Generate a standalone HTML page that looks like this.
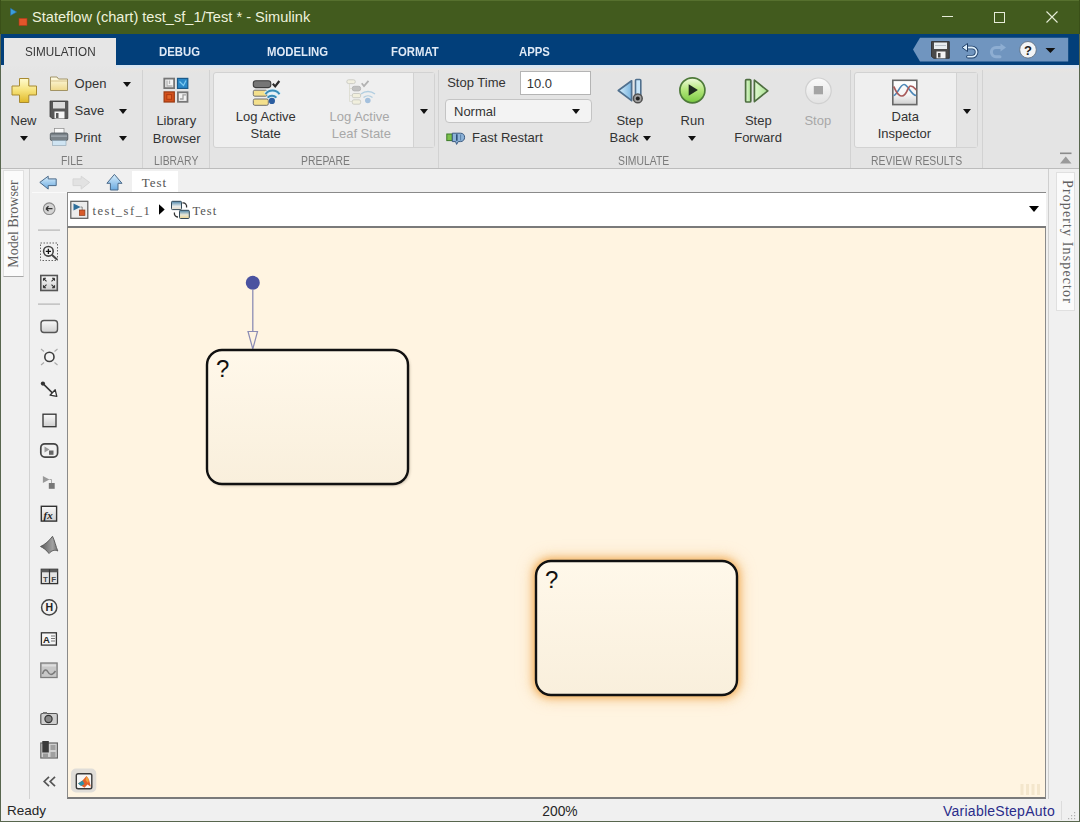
<!DOCTYPE html>
<html><head><meta charset="utf-8">
<style>
*{margin:0;padding:0;box-sizing:border-box}
html,body{width:1080px;height:822px;overflow:hidden;background:#f0f0f0;font-family:"Liberation Sans",sans-serif;color:#333;position:relative}
.a{position:absolute}
.t{position:absolute;white-space:nowrap;line-height:1}
.t13{font-size:13px}
.sec{font-size:13px;color:#7b7b7b;transform:scaleX(0.8);transform-origin:0 0}
.tab{font-size:13.5px;font-weight:bold;color:#dfe9f5;transform:scaleX(0.84);transform-origin:0 0}
.arr{position:absolute;width:0;height:0;border-left:4.5px solid transparent;border-right:4.5px solid transparent;border-top:5px solid #111}
.vsep{position:absolute;width:1px;background:#d2d2d2}
svg{position:absolute;overflow:visible}
</style></head><body>
<!-- title bar -->
<div class="a" style="left:0;top:0;width:1080px;height:34px;background:#425b1e;border-top:1px solid #56702e"></div>
<svg style="left:0;top:0" width="30" height="30" viewBox="0 0 30 30"><path d="M10.5 8.3 L16.7 12 L10.5 15.6Z" fill="#3a9ede" stroke="#2a6a9a" stroke-width="0.6"/><rect x="19" y="18.3" width="8" height="7.3" fill="#e2552a" stroke="#a83a1a" stroke-width="0.6"/></svg>
<div class="t" style="left:32px;top:10.1px;font-size:14.6px;color:#eef2dc">Stateflow (chart) test_sf_1/Test * - Simulink</div>
<div class="a" style="left:942px;top:16px;width:11px;height:1px;background:#e6ecd8"></div>
<div class="a" style="left:994px;top:12px;width:11px;height:11px;border:1px solid #e6ecd8"></div>
<svg style="left:1046px;top:11px" width="12" height="12" viewBox="0 0 12 12"><path d="M0.5 0.5L11.5 11.5M11.5 0.5L0.5 11.5" stroke="#e6ecd8" stroke-width="1.1"/></svg>
<!-- tab bar -->
<div class="a" style="left:0;top:34px;width:1080px;height:31px;background:#023f7a"></div>

<div class="a" style="left:4px;top:38px;width:112px;height:28px;background:#e6e6e6"></div>
<div class="t" style="left:24.7px;top:44.5px;font-size:13px;color:#383838;transform:scaleX(0.9);transform-origin:0 0">SIMULATION</div>
<div class="t tab" style="left:159.4px;top:45.2px">DEBUG</div>
<div class="t tab" style="left:266.5px;top:45.2px">MODELING</div>
<div class="t tab" style="left:391px;top:45.2px">FORMAT</div>
<div class="t tab" style="left:519px;top:45.2px">APPS</div>
<!-- quick access -->
<svg style="left:0;top:0" width="1080" height="66" viewBox="0 0 1080 66">
<path d="M913 49.5L920 37.8H1068.2V61.6H920Z" fill="#7095bf"/>
<!-- floppy -->
<path d="M931.5 41.6H949.3V58.3H933.5L931.5 56.3Z" fill="#4a4a4a" stroke="#2a2a2a" stroke-width="0.8"/>
<rect x="934" y="42.5" width="13" height="6.5" fill="#e8ecef"/>
<rect x="935" y="45" width="11" height="1" fill="#b8c0c8"/>
<rect x="936.5" y="51.5" width="9" height="6.8" fill="#f4f4f4"/>
<rect x="938" y="53" width="2.5" height="4.5" fill="#4a4a4a"/>
<!-- undo -->
<path d="M966 47.5H972A4.6 4.6 0 0 1 972 56.7H968" fill="none" stroke="#1e3e66" stroke-width="3.6" stroke-linecap="round"/>
<path d="M966 47.5H972A4.6 4.6 0 0 1 972 56.7H968" fill="none" stroke="#dceefc" stroke-width="1.8" stroke-linecap="round"/>
<path d="M962 47.5L967.5 43.5V51.5Z" fill="#dceefc" stroke="#1e3e66" stroke-width="1" stroke-linejoin="round"/>
<!-- redo faded -->
<path d="M1002 47.5H996A4.6 4.6 0 0 0 996 56.7H1000" fill="none" stroke="#8eaed2" stroke-width="3" stroke-linecap="round"/>
<path d="M1006 47.5L1000.5 43.5V51.5Z" fill="#8eaed2"/>
<!-- help -->
<circle cx="1028" cy="49.8" r="8.3" fill="#f2f4f6" stroke="#5a6a7a" stroke-width="0.8"/>
<text x="1028" y="55" text-anchor="middle" font-family="Liberation Sans" font-weight="bold" font-size="13" fill="#222">?</text>
<path d="M1045.5 48H1055.3L1050.4 53Z" fill="#111"/>
</svg>
<!-- ribbon -->
<div class="a" style="left:0;top:66px;width:1080px;height:103px;background:#e4e4e4;border-bottom:1px solid #bcbcbc"></div>
<div class="a" style="left:0;top:65px;width:1080px;height:8px;background:linear-gradient(#d6e4f2 0px,#dde6ee 3px,#e8e5e2 4px,#e4e4e4 8px)"></div>
<div class="a" style="left:4px;top:65px;width:112px;height:8px;background:linear-gradient(#e6e6e6,#e4e4e4)"></div>
<div class="vsep" style="left:142px;top:70px;height:98px"></div>
<div class="vsep" style="left:209px;top:70px;height:98px"></div>
<div class="vsep" style="left:438px;top:70px;height:98px"></div>
<div class="vsep" style="left:850px;top:70px;height:98px"></div>
<div class="vsep" style="left:982px;top:70px;height:98px"></div>
<!-- galleries -->
<div class="a" style="left:213px;top:72px;width:222px;height:76px;background:#efefef;border:1px solid #d2d2d2;border-radius:3px"></div>
<div class="a" style="left:413px;top:73px;width:21px;height:74px;background:#e4e4e4;border-left:1px solid #d2d2d2"></div>
<div class="a" style="left:854px;top:72px;width:124px;height:76px;background:#efefef;border:1px solid #d2d2d2;border-radius:3px"></div>
<div class="a" style="left:956px;top:73px;width:21px;height:74px;background:#e4e4e4;border-left:1px solid #d2d2d2"></div>
<!-- ribbon icons -->
<svg style="left:0;top:0" width="1080" height="170" viewBox="0 0 1080 170">
<defs>
<linearGradient id="gy" x1="0" y1="0" x2="0" y2="1"><stop offset="0" stop-color="#fffbd0"/><stop offset="0.5" stop-color="#f6e27a"/><stop offset="1" stop-color="#e0b828"/></linearGradient>
<linearGradient id="gf" x1="0" y1="0" x2="0" y2="1"><stop offset="0" stop-color="#fffde8"/><stop offset="1" stop-color="#efd88a"/></linearGradient>
<linearGradient id="gb" x1="0" y1="0" x2="1" y2="0"><stop offset="0" stop-color="#d8f0fc"/><stop offset="1" stop-color="#78b4e0"/></linearGradient>
<linearGradient id="gg" x1="0" y1="0" x2="0" y2="1"><stop offset="0" stop-color="#f2fbe0"/><stop offset="0.45" stop-color="#b8e880"/><stop offset="1" stop-color="#78c840"/></linearGradient>
<linearGradient id="gsf" x1="0" y1="0" x2="1" y2="0"><stop offset="0" stop-color="#e0fad0"/><stop offset="1" stop-color="#a8e090"/></linearGradient>
<linearGradient id="gdi" x1="0" y1="0" x2="0" y2="1"><stop offset="0" stop-color="#ffffff"/><stop offset="0.6" stop-color="#f4f4f4"/><stop offset="1" stop-color="#cfcfcf"/></linearGradient>
<linearGradient id="gst" x1="0" y1="0" x2="0" y2="1"><stop offset="0" stop-color="#fafafa"/><stop offset="1" stop-color="#e2e2e2"/></linearGradient>
</defs>
<!-- New plus -->
<path d="M19.5 78.5H28.8V86H36.5V95H28.8V102.5H19.5V95H12V86H19.5Z" fill="url(#gy)" stroke="#a88a30" stroke-width="1"/>
<!-- Open folder -->
<path d="M50.5 77H57L58.5 79H67.5V90.5H50.5Z" fill="url(#gf)" stroke="#9a8a5a" stroke-width="0.9"/>
<path d="M50.5 81H67.5" stroke="#c8b070" stroke-width="0.7"/>
<!-- Save floppy -->
<path d="M50 101H67.8V118.5H52L50 116.5Z" fill="#585858" stroke="#3a3a3a" stroke-width="0.8"/>
<rect x="53" y="102" width="12" height="6.5" fill="#dcdcdc"/>
<rect x="54.5" y="111.5" width="10" height="7" fill="#f6f6f6"/>
<rect x="56" y="113" width="2.5" height="5" fill="#585858"/>
<!-- Print -->
<rect x="54.5" y="128.5" width="9.5" height="5" fill="#fafafa" stroke="#8a8a8a" stroke-width="0.7"/>
<rect x="50.3" y="133" width="17.5" height="7.5" rx="1.5" fill="#7a8288" stroke="#4a5258" stroke-width="0.8"/>
<rect x="51" y="135.5" width="16" height="1.2" fill="#a8b0b8"/>
<rect x="52.5" y="140.5" width="13.5" height="5" fill="#cfe4f2" stroke="#8aa0b0" stroke-width="0.6"/>
<!-- Library browser -->
<rect x="164.3" y="78.6" width="9.8" height="9.5" fill="#f2f2f2" stroke="#767676" stroke-width="1.8"/>
<path d="M167 80.5V86H172.5M169.5 80.5V84" fill="none" stroke="#b4b4b4" stroke-width="1.3"/>
<rect x="177.5" y="78.4" width="10.3" height="10" fill="#2a88c8" stroke="#1a5a8a" stroke-width="1.2"/>
<path d="M179.5 81.5L183.5 85.5L186 80.5" fill="none" stroke="#7ac8f0" stroke-width="1.3"/>
<rect x="164.1" y="91.9" width="10.2" height="10.1" fill="#d4501c" stroke="#9a3a12" stroke-width="1.2"/>
<rect x="166.8" y="94.6" width="4.8" height="4.7" fill="#e0662a" stroke="#b03a10" stroke-width="1"/>
<rect x="177.9" y="92.3" width="9.6" height="9.5" fill="#f2f2f2" stroke="#767676" stroke-width="1.8"/>
<path d="M179.8 99H183V94.8H186" fill="none" stroke="#a0a0a0" stroke-width="1.3"/>
<!-- Log Active State -->
<rect x="253.3" y="80.8" width="17.5" height="6.8" rx="2.5" fill="#767676" stroke="#3e3e3e" stroke-width="1.1"/>
<rect x="253.3" y="90.2" width="14" height="6" rx="1.5" fill="#f4e08c" stroke="#6e6e6e" stroke-width="1"/>
<rect x="253.3" y="99" width="15" height="6.3" rx="1.5" fill="#f4e08c" stroke="#6e6e6e" stroke-width="1"/>
<path d="M272.8 83.8L275.2 86.4L279.3 81" fill="none" stroke="#2a2a2a" stroke-width="2.2"/>
<path d="M265.5 94.2A8.5 8.5 0 0 1 279.5 94.2" fill="none" stroke="#d8f0fa" stroke-width="4"/>
<path d="M265.5 94.2A8.5 8.5 0 0 1 279.5 94.2" fill="none" stroke="#3a8cb8" stroke-width="2"/>
<path d="M267.6 97.6A6 6 0 0 1 276.4 97.6" fill="none" stroke="#d8f0fa" stroke-width="3.6"/>
<path d="M267.6 97.6A6 6 0 0 1 276.4 97.6" fill="none" stroke="#3a8cb8" stroke-width="2"/>
<circle cx="271.9" cy="100.9" r="3.1" fill="#2c5ea0"/>
<!-- Log Active Leaf State (faded) -->
<g opacity="0.45">
<rect x="346.8" y="79.8" width="8.5" height="3.8" rx="1.8" fill="#f4f0d0" stroke="#9a9a8a" stroke-width="0.9"/>
<path d="M349.5 83.6V101.5H352.5M349.5 88.5H352.5M349.5 95.5H352.5" fill="none" stroke="#c8c8b0" stroke-width="0.9"/>
<rect x="352.3" y="86.3" width="8.3" height="4.6" rx="2" fill="#8a8a8a" stroke="#6a6a6a" stroke-width="0.9"/>
<rect x="352.3" y="93.5" width="8.3" height="4.2" rx="1.5" fill="#f4f0c8" stroke="#9a9a8a" stroke-width="0.9"/>
<rect x="352.3" y="99.8" width="8.3" height="4.4" rx="1.5" fill="#f4f0c8" stroke="#9a9a8a" stroke-width="0.9"/>
<path d="M361.7 83.2L364 86L368.5 80.8" fill="none" stroke="#6a6a6a" stroke-width="1.8"/>
<path d="M361 94A11 11 0 0 1 375 94" fill="none" stroke="#6aa8d0" stroke-width="1.4"/>
<path d="M363.5 97.5A7 7 0 0 1 372.5 97.5" fill="none" stroke="#6aa8d0" stroke-width="1.4"/>
<circle cx="367.8" cy="100.5" r="2.8" fill="#4a88c8"/>
</g>
<!-- Fast restart -->
<rect x="446.8" y="134" width="5.5" height="6.6" fill="#7cc04a" stroke="#3a7a28" stroke-width="1"/>
<path d="M452.3 133.2H460.5C463.2 133.2 464.6 135 464.6 137.3C464.6 139.7 463 141.6 460.5 141.6H458.2L456.6 144.4L455.6 141.6H452.3Z" fill="#8cb2d8" stroke="#3a5a80" stroke-width="1"/>
<path d="M456.8 134.2V140.8" stroke="#2e5078" stroke-width="1.6"/>
<path d="M460.6 134.5V140.5" stroke="#5a80a8" stroke-width="1"/>
<!-- Step back -->
<path d="M618.3 90.5L631.6 80.8V100.7Z" fill="url(#gb)" stroke="#50708e" stroke-width="1.7" stroke-linejoin="round"/>
<rect x="635.5" y="79.5" width="5.3" height="16.5" rx="1" fill="#c8e6fa" stroke="#50708e" stroke-width="1.6"/>
<circle cx="637.8" cy="98.4" r="4.4" fill="#a0a0a0" stroke="#505050" stroke-width="1.5"/>
<circle cx="637.8" cy="98.4" r="2" fill="#222"/>
<!-- Run -->
<circle cx="692.4" cy="90.3" r="12.5" fill="url(#gg)" stroke="#4e7a3a" stroke-width="1.7"/>
<path d="M688.7 84.3L697.9 90L688.7 95.7Z" fill="#1e2a1e"/>
<!-- Step forward -->
<rect x="745.6" y="79.6" width="5.2" height="22.4" rx="1" fill="url(#gsf)" stroke="#4e6e40" stroke-width="1.7"/>
<path d="M754.4 80.2L767.8 90.9L754.4 101.6Z" fill="url(#gsf)" stroke="#4e6e40" stroke-width="1.7" stroke-linejoin="round"/>
<!-- Stop -->
<circle cx="818.4" cy="90.8" r="12.8" fill="url(#gst)" stroke="#d0d0d0" stroke-width="1.2"/>
<rect x="813.8" y="86" width="9.2" height="8.3" fill="#a4a4a4"/>
<!-- Data Inspector -->
<rect x="892.8" y="80.3" width="24" height="24.3" fill="url(#gdi)" stroke="#686868" stroke-width="1.6"/>
<path d="M893.6 95.5C897 95.5 900 84.5 904 84.5S911 95 916.2 95.5" fill="none" stroke="#4e88b8" stroke-width="1.7"/>
<path d="M893.6 86.5C896 90 897 96 902 96S907.5 86 910.5 86S914.5 88 916.2 90" fill="none" stroke="#a85a5a" stroke-width="1.7"/>
<!-- collapse ribbon -->
<rect x="1060" y="152.5" width="11.5" height="1.6" fill="#8a8a8a"/>
<path d="M1060 163.5L1065.75 156.5L1071.5 163.5Z" fill="#9a9a9a"/>
</svg>
<!-- FILE -->
<div class="t t13" style="left:10.5px;top:114px">New</div>
<div class="arr" style="left:20px;top:135.5px"></div>
<div class="t t13" style="left:74.6px;top:77.2px">Open</div>
<div class="arr" style="left:123px;top:82px"></div>
<div class="t t13" style="left:74.6px;top:104.3px">Save</div>
<div class="arr" style="left:118.5px;top:109px"></div>
<div class="t t13" style="left:74.6px;top:130.7px">Print</div>
<div class="arr" style="left:118.5px;top:136px"></div>
<div class="t sec" style="left:61px;top:154.2px">FILE</div>
<!-- LIBRARY -->
<div class="t t13" style="left:156.4px;top:114px">Library</div>
<div class="t t13" style="left:152.8px;top:132px">Browser</div>
<div class="t sec" style="left:153.9px;top:154.2px">LIBRARY</div>
<!-- PREPARE -->
<div class="t t13" style="left:235.8px;top:110px">Log Active</div>
<div class="t t13" style="left:250.5px;top:127px">State</div>
<div class="t t13" style="left:329.6px;top:110px;color:#a8a8a8">Log Active</div>
<div class="t t13" style="left:331.7px;top:127px;color:#a8a8a8">Leaf State</div>
<div class="arr" style="left:420px;top:109px"></div>
<div class="t sec" style="left:301px;top:154.2px">PREPARE</div>
<!-- SIMULATE -->
<div class="t t13" style="left:447.2px;top:76.4px">Stop Time</div>
<div class="a" style="left:520px;top:71px;width:71px;height:24px;background:#fff;border:1px solid #b4b4b4"></div>
<div class="t t13" style="left:526.7px;top:77px">10.0</div>
<div class="a" style="left:444.5px;top:98.5px;width:147px;height:24px;background:#f3f3f3;border:1px solid #c4c4c4;border-radius:4px"></div>
<div class="t t13" style="left:454px;top:105.1px">Normal</div>
<div class="arr" style="left:572px;top:109px"></div>
<div class="t t13" style="left:472px;top:131.4px">Fast Restart</div>
<div class="t t13" style="left:616.4px;top:113.8px">Step</div>
<div class="t t13" style="left:609.5px;top:131.4px">Back</div>
<div class="arr" style="left:643px;top:135.5px"></div>
<div class="t t13" style="left:680.6px;top:113.8px">Run</div>
<div class="arr" style="left:688px;top:135.5px"></div>
<div class="t t13" style="left:744.9px;top:113.8px">Step</div>
<div class="t t13" style="left:734.2px;top:131.4px">Forward</div>
<div class="t t13" style="left:804.4px;top:113.8px;color:#a8a8a8">Stop</div>
<div class="t sec" style="left:617.6px;top:154.2px">SIMULATE</div>
<!-- REVIEW -->
<div class="t t13" style="left:891.5px;top:110px">Data</div>
<div class="t t13" style="left:877.7px;top:127px">Inspector</div>
<div class="arr" style="left:962.5px;top:109px"></div>
<div class="t sec" style="left:870.9px;top:154.2px">REVIEW RESULTS</div>
<!-- lower area -->
<div class="a" style="left:2.5px;top:170px;width:21.5px;height:107px;background:#fbfbfb;border:1px solid #e0e0e0;border-bottom-color:#a8a8a8"></div>
<div class="t" style="left:-39px;top:217.3px;width:106px;height:14px;transform:rotate(-90deg);font-family:'Liberation Serif',serif;font-size:14px;color:#606060;letter-spacing:0px;text-align:center">Model Browser</div>
<div class="a" style="left:29px;top:169px;width:1px;height:630px;background:#d2d2d2"></div>
<div class="a" style="left:132px;top:171px;width:46px;height:22px;background:#fff"></div>
<div class="t" style="left:141.7px;top:176px;font-family:'Liberation Serif',serif;font-size:13px;color:#555;letter-spacing:1px">Test</div>
<div class="a" style="left:32px;top:192px;width:35px;height:1px;background:#fafafa"></div>
<div class="a" style="left:67px;top:191.5px;width:979px;height:2px;background:#8a8a8a"></div>
<div class="a" style="left:67px;top:193px;width:979px;height:35px;background:#fff;border-left:1px solid #8a8a8a;border-bottom:2px solid #7a7a7a"></div>
<div class="t" style="left:92.5px;top:204.5px;font-family:'Liberation Serif',serif;font-size:12.5px;color:#555;letter-spacing:1.5px">test_sf_1</div>
<div class="t" style="left:192.5px;top:204.5px;font-family:'Liberation Serif',serif;font-size:12.5px;color:#555;letter-spacing:1px">Test</div>
<div class="arr" style="left:1029px;top:205.5px;border-left-width:5px;border-right-width:5px;border-top-width:6px;border-top-color:#000"></div>
<!-- canvas -->
<div class="a" style="left:67px;top:228px;width:979px;height:571px;background:#fff4e1;border-left:1px solid #8a8a8a;border-right:1px solid #8a8a8a;border-bottom:2px solid #7a7a7a"></div>
<div class="a" style="left:1048px;top:169px;width:1px;height:630px;background:#cfcfcf"></div>
<!-- right panel -->
<div class="a" style="left:1055.5px;top:171.5px;width:19.5px;height:139px;background:#fbfbfb;border:1px solid #e0e0e0"></div>
<div class="t" style="left:1005.2px;top:235px;width:124px;height:14px;transform:rotate(90deg);font-family:'Liberation Serif',serif;font-size:14px;color:#606060;letter-spacing:1.12px;text-align:center">Property Inspector</div>
<!-- status -->
<div class="t" style="left:7px;top:804px;font-size:13.5px;color:#262626">Ready</div>
<div class="t" style="left:542.3px;top:804.6px;font-size:13.8px;color:#262626">200%</div>
<div class="t" style="left:943px;top:804px;font-size:14px;letter-spacing:0.25px;color:#2a2c8a">VariableStepAuto</div>
<!-- icons lower -->
<svg style="left:0;top:0" width="1080" height="822" viewBox="0 0 1080 822">
<defs>
<linearGradient id="gab" x1="0" y1="0" x2="0" y2="1"><stop offset="0" stop-color="#d8eefc"/><stop offset="1" stop-color="#6aaae0"/></linearGradient>
<linearGradient id="gcs1" x1="0" y1="0" x2="0" y2="1"><stop offset="0" stop-color="#4a84a8"/><stop offset="0.6" stop-color="#e8ecea"/><stop offset="1" stop-color="#e8dcc8"/></linearGradient>
<linearGradient id="gcs2" x1="0" y1="0" x2="0" y2="1"><stop offset="0" stop-color="#4a84a8"/><stop offset="0.55" stop-color="#e8e8d8"/><stop offset="1" stop-color="#ecd48c"/></linearGradient>
<linearGradient id="glt" x1="0" y1="0" x2="0" y2="1"><stop offset="0" stop-color="#fafafa"/><stop offset="1" stop-color="#cfcfcf"/></linearGradient>
<linearGradient id="sg" x1="0" y1="0" x2="0" y2="1"><stop offset="0" stop-color="#fff8ea"/><stop offset="1" stop-color="#f9efdc"/></linearGradient>
<filter id="glow" x="-30%" y="-30%" width="160%" height="160%"><feGaussianBlur stdDeviation="4.5"/></filter>
<linearGradient id="gmem" x1="0" y1="0" x2="1" y2="0"><stop offset="0" stop-color="#5a5a5a"/><stop offset="0.7" stop-color="#a0a0a0"/><stop offset="1" stop-color="#707070"/></linearGradient>
<filter id="glow2" x="-30%" y="-30%" width="160%" height="160%"><feGaussianBlur stdDeviation="8"/></filter>
<filter id="sh" x="-10%" y="-10%" width="120%" height="120%"><feGaussianBlur stdDeviation="1.6"/></filter>
</defs>
<!-- nav arrows -->
<path d="M39.8 182.4L48.2 176.2V178.9H56.2V185.6H48.2V189.1Z" fill="url(#gab)" stroke="#4a6a8a" stroke-width="1" stroke-linejoin="round"/>
<path d="M89.6 182.4L81.2 176.2V178.9H73V185.6H81.2V189.1Z" fill="#e2e2e2" stroke="#d6d6d6" stroke-width="1" stroke-linejoin="round"/>
<path d="M114.4 174.4L122 183.3H118V190H110.4V183.3H106.9Z" fill="url(#gab)" stroke="#4a6a8a" stroke-width="1" stroke-linejoin="round"/>
<!-- model icon -->
<rect x="70.8" y="201.3" width="17" height="17" fill="#ececec" stroke="#5a5a5a" stroke-width="1.2"/>
<path d="M73.5 203.5L80.6 207L73.5 210.6Z" fill="#2e6e9a"/>
<path d="M80.6 207H82.2V210" fill="none" stroke="#777" stroke-width="0.8"/>
<rect x="79.4" y="210" width="5.5" height="5.4" fill="#d85a2a" stroke="#8a3a1a" stroke-width="0.7"/>
<!-- breadcrumb separator -->
<path d="M159 204.2L164.7 209.5L159 214.7Z" fill="#000"/>
<!-- chart icon -->
<rect x="171.5" y="201.3" width="10" height="8.3" rx="1" fill="url(#gcs1)" stroke="#344a58" stroke-width="1"/>
<rect x="179.5" y="210.3" width="9.8" height="8.2" rx="1" fill="url(#gcs2)" stroke="#344a58" stroke-width="1"/>
<path d="M182.5 203A3.5 3.5 0 0 1 186.5 207.5" fill="none" stroke="#333" stroke-width="1.3"/>
<path d="M174.5 212.5A3.5 3.5 0 0 0 178 217" fill="none" stroke="#333" stroke-width="1.3"/>
<!-- left toolbar -->
<circle cx="49.2" cy="208.7" r="5.8" fill="#d4d4d4" stroke="#8a8a8a" stroke-width="1.1"/>
<path d="M46 208.7H52.5M46 208.7L48.5 206.3M46 208.7L48.5 211.1" fill="none" stroke="#333" stroke-width="1.3"/>
<rect x="38" y="229.5" width="22" height="1.2" fill="#b4b4b4"/>
<rect x="40.5" y="243" width="17" height="17.5" fill="none" stroke="#555" stroke-width="0.9" stroke-dasharray="1.5 1.5"/>
<circle cx="48.4" cy="251.3" r="4.8" fill="#f4f4f4" stroke="#444" stroke-width="1.6"/>
<path d="M45.8 251.3H51M48.4 248.7V253.9" stroke="#111" stroke-width="1.3"/>
<path d="M51.8 254.8L57 259.5" stroke="#444" stroke-width="2"/>
<rect x="40.8" y="275.5" width="16.5" height="15" fill="url(#glt)" stroke="#555" stroke-width="1.6"/>
<path d="M43.5 278.3L46.5 281.3M43.5 278.3H46M43.5 278.3V280.8M54.5 278.3L51.5 281.3M54.5 278.3H52M54.5 278.3V280.8M43.5 287.7L46.5 284.7M43.5 287.7H46M43.5 287.7V285.2M54.5 287.7L51.5 284.7M54.5 287.7H52M54.5 287.7V285.2" fill="none" stroke="#333" stroke-width="1.1"/>
<rect x="38" y="303.5" width="22" height="1.2" fill="#b4b4b4"/>
<rect x="41" y="320.5" width="16.5" height="12" rx="3" fill="url(#glt)" stroke="#555" stroke-width="1.4"/>
<circle cx="49.4" cy="356.9" r="4.6" fill="#f4f4f4" stroke="#3e3e3e" stroke-width="1.6"/>
<path d="M41 349L44 351.5M57.5 349L54.5 351.5M41 365L44 362.5M57.5 365L54.5 362.5" stroke="#aaa" stroke-width="1.1"/>
<circle cx="42.9" cy="383.6" r="2.1" fill="#333"/>
<path d="M43 383.7L52.5 393" stroke="#333" stroke-width="1.7"/>
<path d="M56.8 396.4L50 395.2L55.2 389.8Z" fill="#fff" stroke="#333" stroke-width="1.3" stroke-linejoin="round"/>
<rect x="43" y="414.2" width="13" height="12.5" fill="url(#glt)" stroke="#333" stroke-width="1.3"/>
<rect x="40.8" y="443.8" width="16.8" height="13.3" rx="4" fill="#f0f0f0" stroke="#444" stroke-width="1.7"/>
<path d="M44.5 446.5L49.5 449.5L44.5 452.5Z" fill="#999"/>
<rect x="49" y="450.5" width="4.5" height="4.3" fill="#666"/>
<path d="M42.9 476L49.4 479.5L42.9 483Z" fill="#999"/>
<path d="M49.4 479.5H51.5V483" fill="none" stroke="#999" stroke-width="0.8"/>
<rect x="48.8" y="483" width="5.9" height="5.8" fill="#777"/>
<rect x="41.3" y="506.3" width="15.3" height="14.8" fill="url(#glt)" stroke="#333" stroke-width="1.4"/>
<text x="43.5" y="518.5" font-family="Liberation Serif" font-style="italic" font-weight="bold" font-size="11" fill="#222">fx</text>
<path d="M40.5 546.5C45 544.5 49 541 52.5 536.3C54.5 540 56 547 57.8 551C54.5 549.5 51.5 550.5 49 553.5C46.5 550 43.5 548 40.5 546.5Z" fill="url(#gmem)" stroke="#555" stroke-width="0.9"/>
<rect x="41.3" y="569.3" width="16.3" height="14.3" fill="#e4e4e4" stroke="#333" stroke-width="1.3"/>
<rect x="41.3" y="569.3" width="16.3" height="3" fill="#5a5a5a"/>
<path d="M49.5 569.3V583.6" stroke="#333" stroke-width="1.2"/>
<text x="45.4" y="581.5" text-anchor="middle" font-family="Liberation Sans" font-weight="bold" font-size="8" fill="#444">T</text>
<text x="53.6" y="581.5" text-anchor="middle" font-family="Liberation Sans" font-weight="bold" font-size="8" fill="#444">F</text>
<circle cx="49.2" cy="607.4" r="7.6" fill="#f2f2f2" stroke="#444" stroke-width="1.5"/>
<text x="49.2" y="611.3" text-anchor="middle" font-family="Liberation Sans" font-weight="bold" font-size="10.5" fill="#222">H</text>
<rect x="41.4" y="632.8" width="15" height="12.3" fill="#f6f6f6" stroke="#333" stroke-width="1.3"/>
<text x="46.5" y="643" text-anchor="middle" font-family="Liberation Sans" font-weight="bold" font-size="9.5" fill="#222">A</text>
<path d="M51 636H55M51 638.5H55M51 641H55" stroke="#777" stroke-width="1"/>
<rect x="40.8" y="663" width="16.3" height="14.5" fill="#c8c8c8" stroke="#7e7e7e" stroke-width="1.3"/>
<rect x="42" y="664.5" width="14" height="2" fill="#dedede"/>
<path d="M42.5 674C44 669 46.5 669 48 672S52 676 55.5 671" fill="none" stroke="#7a7a7a" stroke-width="1.5"/>
<rect x="40.8" y="713.5" width="16.6" height="11" rx="1.5" fill="#cfcfcf" stroke="#555" stroke-width="1.2"/>
<rect x="43" y="712" width="4" height="2" fill="#777"/>
<circle cx="48.5" cy="719" r="3.6" fill="#888" stroke="#333" stroke-width="1.2"/>
<rect x="40.8" y="743" width="16.6" height="15" fill="#d0d0d0" stroke="#666" stroke-width="1.2"/>
<rect x="42.3" y="741" width="6.5" height="11.5" fill="#3a3a3a"/>
<rect x="43" y="753.5" width="5" height="3.5" fill="#9a9a9a"/>
<rect x="50.5" y="745" width="5" height="5" fill="#a0a0a0"/>
<rect x="50.5" y="752" width="5" height="5" fill="#a0a0a0"/>
<path d="M49 776.8L44.2 781.5L49 786.2M55 776.8L50.2 781.5L55 786.2" fill="none" stroke="#555" stroke-width="1.7"/>
<!-- matlab button -->
<rect x="71" y="768.5" width="25.3" height="24" rx="5" fill="#e0ddd8"/>
<rect x="76.3" y="773.8" width="15.5" height="15" rx="1.8" fill="#f6f6f6" stroke="#3a3a3a" stroke-width="1.4"/>
<path d="M78 783.5L82.5 780.5L86.5 776L89 779.5L90.8 786.8L87.5 784.5L84.5 787.8Z" fill="#e2602a"/>
<path d="M86.5 776L89 779.5L88 783L85.5 780Z" fill="#f0a040"/>
<path d="M78 783.5L82.5 780.5L84.5 784L81 786Z" fill="#2e90a8"/>
<!-- canvas grid watermark -->
<path d="M1022 784V795M1027.5 784V795M1033 784V795M1038.5 784V795" stroke="#f4e6cc" stroke-width="3"/>
<rect x="1061" y="801" width="1" height="19" fill="#dcdcdc"/>
<!-- resize grip -->
<path d="M1074 812h1.2v1.2h-1.2zM1071 815h1.2v1.2h-1.2zM1074 815h1.2v1.2h-1.2zM1068 818h1.2v1.2h-1.2zM1071 818h1.2v1.2h-1.2zM1074 818h1.2v1.2h-1.2z" fill="#b0b0b0"/>
<!-- states -->
<circle cx="252.8" cy="282.8" r="7" fill="#4a52a0"/>
<line x1="252.8" y1="289" x2="252.8" y2="333" stroke="#8c8cb4" stroke-width="1.3"/>
<path d="M248 331.5L257.5 331.5L252.8 349Z" fill="#fff4e1" stroke="#8c8cb4" stroke-width="1.2"/>
<rect x="208.5" y="351.5" width="201" height="134" rx="15" fill="#7a6a58" filter="url(#sh)" opacity="0.45"/>
<rect x="207" y="350" width="201" height="134" rx="15" fill="url(#sg)" stroke="#111" stroke-width="2.4"/>
<text x="216" y="377" font-family="Liberation Sans" font-size="24" fill="#111">?</text>
<rect x="532" y="557" width="209" height="142" rx="18" fill="#f4c890" filter="url(#glow2)" opacity="0.7"/>
<rect x="534" y="559" width="205" height="138" rx="16" fill="#f2aa50" filter="url(#glow)"/>
<rect x="536" y="561" width="201" height="134" rx="15" fill="url(#sg)" stroke="#111" stroke-width="2.4"/>
<text x="545" y="588" font-family="Liberation Sans" font-size="24" fill="#111">?</text>
</svg>
<!-- frame -->
<div class="a" style="left:0;top:34px;width:1080px;height:788px;border:1px solid #58664e;border-top:none"></div>
<div class="a" style="left:0;top:0;width:1px;height:34px;background:#3a5018"></div>
<div class="a" style="left:1079px;top:0;width:1px;height:34px;background:#3a5018"></div>
</body></html>
